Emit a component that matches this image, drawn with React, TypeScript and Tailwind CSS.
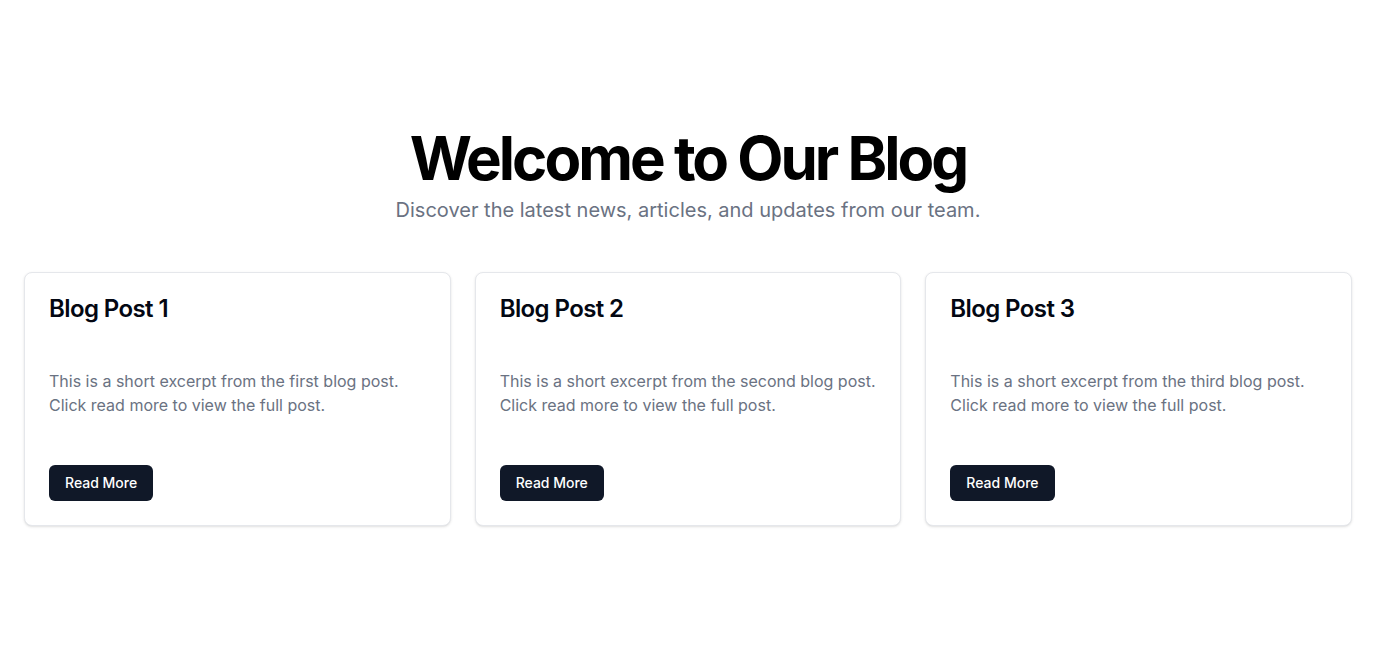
import React from 'react';

const posts = [
  { id: 1, title: 'Blog Post 1', excerpt: 'This is a short excerpt from the first blog post. Click read more to view the full post.' },
  { id: 2, title: 'Blog Post 2', excerpt: 'This is a short excerpt from the second blog post. Click read more to view the full post.' },
  { id: 3, title: 'Blog Post 3', excerpt: 'This is a short excerpt from the third blog post. Click read more to view the full post.' },
];

export default function App() {
  return (
    <div className="min-h-screen bg-white font-['Inter',sans-serif] px-6 pt-32 pb-16">
      <div className="text-center mb-12">
        <h1 className="text-6xl leading-none font-bold tracking-tighter text-black mb-2">Welcome to Our Blog</h1>
        <p className="text-xl text-gray-500">Discover the latest news, articles, and updates from our team.</p>
      </div>

      <div className="grid grid-cols-3 gap-6">
        {posts.map(post => (
          <div key={post.id} className="bg-white rounded-lg border border-gray-200 shadow-sm p-6 flex flex-col">
            <h3 className="text-2xl leading-none font-semibold tracking-tight text-gray-950">{post.title}</h3>
            <p className="mt-12 text-base leading-6 text-gray-500">{post.excerpt}</p>
            <div className="mt-12">
              <button className="h-9 px-4 rounded-md bg-gray-900 text-white text-sm font-medium">Read More</button>
            </div>
          </div>
        ))}
      </div>
    </div>
  );
}
